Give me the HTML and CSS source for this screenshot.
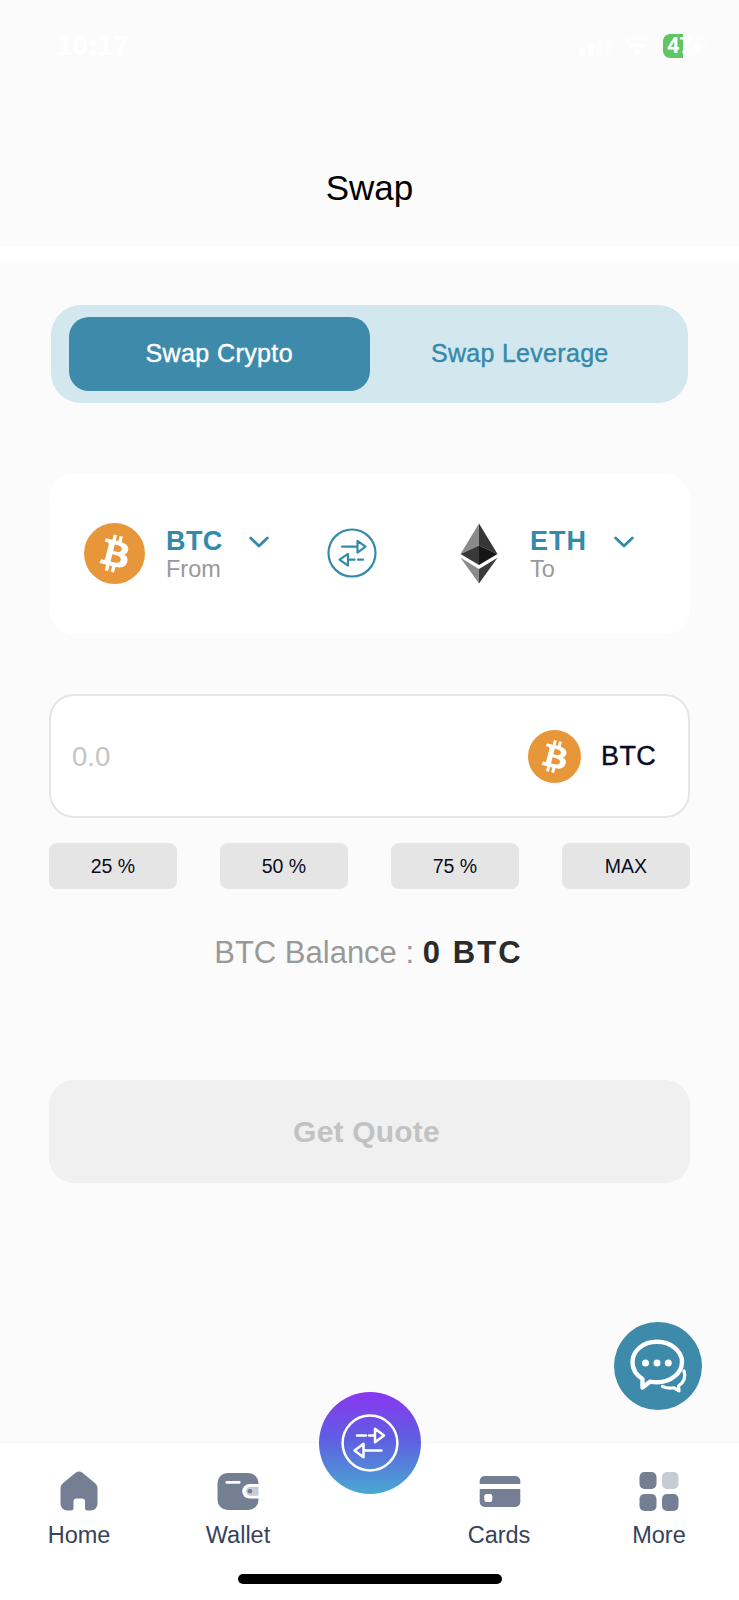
FILE: index.html
```
<!DOCTYPE html>
<html lang="en">
<head>
  <meta charset="UTF-8" />
  <meta name="viewport" content="width=device-width, initial-scale=1.0"/>
  <title>Swap</title>
  <link rel="stylesheet" href="styles.css">
</head>
<body>
  <!-- Shared icons -->
  <svg class="sprite" width="0" height="0">
    <symbol id="btc" viewBox="0 0 32 32">
      <circle cx="16" cy="16" r="16" fill="#e8963a"/>
      <path fill="#fff" d="M23.189 14.02c.314-2.096-1.283-3.223-3.465-3.975l.708-2.84-1.728-.43-.69 2.765c-.454-.114-.92-.22-1.385-.326l.695-2.783L15.596 6l-.708 2.839c-.376-.086-.746-.17-1.104-.26l.002-.009-2.384-.595-.46 1.846s1.283.294 1.256.312c.7.175.826.638.805 1.006l-.806 3.235c.048.012.11.03.18.057l-.183-.045-1.13 4.532c-.086.212-.303.531-.793.41.018.025-1.256-.313-1.256-.313l-.858 1.978 2.25.561c.418.105.828.215 1.231.318l-.715 2.872 1.727.43.708-2.84c.472.127.93.245 1.378.357l-.706 2.828 1.728.43.715-2.866c2.948.558 5.164.333 6.097-2.333.752-2.146-.037-3.385-1.588-4.192 1.13-.26 1.98-1.003 2.207-2.538zm-3.95 5.538c-.533 2.147-4.148.986-5.32.695l.95-3.805c1.172.293 4.929.872 4.37 3.11zm.535-5.569c-.487 1.953-3.495.96-4.47.717l.86-3.45c.975.243 4.118.696 3.61 2.733z"/>
    </symbol>
    <symbol id="chevron" viewBox="0 0 20 12">
      <path d="M1.700 2 10 10l8.300-8" fill="none" stroke="#338aab" stroke-width="2.800" stroke-linecap="round" stroke-linejoin="round"/>
    </symbol>
  </svg>

  <div class="statusbar">
    <span class="time">10:17</span>
    <div class="indicators">
      <svg width="36" height="20" viewBox="0 0 36 20" fill="#fff">
        <rect x="0" y="12" width="6" height="8" rx="2"/>
        <rect x="9" y="8" width="6" height="12" rx="2"/>
        <rect x="18" y="4" width="6" height="16" rx="2" opacity=".4"/>
        <rect x="27" y="0" width="6" height="20" rx="2" opacity=".4"/>
      </svg>
      <svg width="26" height="20" viewBox="0 0 26 20" fill="none" stroke="#fff" stroke-width="3.6">
        <path d="M2 6.500a16 16 0 0 1 22 0" opacity=".5"/>
        <path d="M5.500 11.500a11 11 0 0 1 15 0"/>
        <path d="M13 19l-4-4a6 6 0 0 1 8 0z" fill="#fff" stroke="none"/>
      </svg>
      <div class="battery">47<svg width="11" height="16" viewBox="0 0 11 16"><path d="M7 0 0 9h4L3 16l8-10H6z" fill="#fff"/></svg></div>
    </div>
  </div>

  <header>
    <h1>Swap</h1>
  </header>

  <main>
    <div class="tabs">
      <button class="tab active">Swap Crypto</button>
      <button class="tab">Swap Leverage</button>
    </div>

    <section class="pair">
      <div class="coin from">
        <svg class="coin-icon" width="61" height="61"><use href="#btc"/></svg>
        <div class="coin-text">
          <strong>BTC</strong>
          <span>From</span>
        </div>
        <svg class="chevron" width="20" height="12"><use href="#chevron"/></svg>
      </div>

      <svg class="switch" width="50" height="50" viewBox="0 0 50 50" fill="none" stroke="#338aab" stroke-width="2.200" stroke-linejoin="round" stroke-linecap="round">
        <circle cx="25" cy="25" r="23.500"/>
        <path d="M15 18.700h15M30.500 12.800v11.800l8-5.900z"/>
        <path d="M36 31.700h-5M27.500 31.700h-6M21 25.800v11.800l-8.500-5.900z"/>
      </svg>

      <div class="coin to">
        <svg class="coin-icon" width="38" height="61" viewBox="0 0 38 60">
          <path d="M19 0v22L.5 30.500z" fill="#8a8a8a"/>
          <path d="M19 0v22l18.500 8.500z" fill="#363636"/>
          <path d="M.5 30.500 19 22v19.500z" fill="#393939"/>
          <path d="M37.500 30.500 19 22v19.500z" fill="#161616"/>
          <path d="M.5 34.300 19 45.500V60z" fill="#8a8a8a"/>
          <path d="M37.500 34.300 19 45.500V60z" fill="#3b3b3b"/>
        </svg>
        <div class="coin-text">
          <strong>ETH</strong>
          <span>To</span>
        </div>
        <svg class="chevron" width="20" height="12"><use href="#chevron"/></svg>
      </div>
    </section>

    <div class="amount">
      <span class="placeholder">0.0</span>
      <svg width="53" height="53"><use href="#btc"/></svg>
      <span class="symbol">BTC</span>
    </div>

    <div class="percents">
      <button>25 %</button>
      <button>50 %</button>
      <button>75 %</button>
      <button>MAX</button>
    </div>

    <p class="balance">BTC Balance : <strong>0 BTC</strong></p>

    <button class="quote">Get Quote</button>
  </main>

  <!-- Support chat -->
  <div class="chat">
    <svg width="88" height="88" viewBox="0 0 88 88" fill="none" stroke="#fff" stroke-linejoin="round" stroke-linecap="round">
      <path d="M43 19.800c-13.800 0-24.500 8.700-24.500 20.200 0 7 3.700 13 10 17v8.500l7.500-5.800c2 .4 4.500.6 7 .6 13.500 0 25-9 25-20.300S56.500 19.800 43 19.800z" stroke-width="4.400"/>
      <path d="M70 49c2 6-.5 11.500-5.500 15l.5 5-5-3.200c-4 .8-8 .2-11.500-1.300" stroke-width="3.200"/>
      <g fill="#fff" stroke="none">
        <circle cx="31.500" cy="41" r="3.500"/>
        <circle cx="43" cy="41" r="3.500"/>
        <circle cx="54.300" cy="41" r="3.500"/>
      </g>
    </svg>
  </div>

  <nav>
    <a class="item">
      <svg width="42" height="42" viewBox="0 0 42 42">
        <path d="M17.600 2.800a5.500 5.500 0 0 1 6.800 0l12.800 10.400a6 6 0 0 1 2.300 4.600V34a6.500 6.500 0 0 1-6.500 6.500h-3.500A2.500 2.500 0 0 1 27 38v-6.500a3 3 0 0 0-3-3h-5.500a3 3 0 0 0-3 3V38a2.500 2.500 0 0 1-2.500 2.500H9A6.500 6.500 0 0 1 2.500 34V17.800a6 6 0 0 1 2.300-4.600z" fill="#747f94"/>
      </svg>
      <span>Home</span>
    </a>
    <a class="item">
      <svg width="42" height="42" viewBox="0 0 42 42">
        <rect x=".5" y="3" width="41" height="37" rx="10" fill="#747f94"/>
        <rect x="8.500" y="11" width="15" height="2.800" rx="1" fill="#fff"/>
        <path d="M42 14h-9.500a7.300 7.300 0 0 0 0 14.600H42z" fill="#fff"/>
        <path d="M41.500 16.800H33.600a4.500 4.500 0 0 0 0 9h7.900z" fill="#c7cbd4"/>
        <circle cx="33" cy="21.300" r="2.300" fill="#747f94"/>
      </svg>
      <span>Wallet</span>
    </a>
    <div class="center">
      <div class="fab">
        <svg width="58" height="58" viewBox="0 0 58 58" fill="none" stroke="#fff" stroke-width="2.500" stroke-linejoin="round" stroke-linecap="round">
          <circle cx="29" cy="29" r="27.400"/>
          <path d="M16 21.500h9M28 21.500h5M34 14.700v13.600l9-6.800z"/>
          <path d="M23.500 36.500h17M22.500 29.700v13.600l-9-6.800z"/>
        </svg>
      </div>
    </div>
    <a class="item cards">
      <svg width="42" height="42" viewBox="0 0 42 42" fill="#747f94">
        <path d="M.7 14v-3a5 5 0 0 1 5-5h30.600a5 5 0 0 1 5 5v3z"/>
        <path d="M.7 19h40.600v13a5 5 0 0 1-5 5H5.700a5 5 0 0 1-5-5z"/>
        <rect x="5.300" y="24" width="8" height="8" rx="2.200" fill="#fff"/>
      </svg>
      <span>Cards</span>
    </a>
    <a class="item">
      <svg width="42" height="42" viewBox="0 0 42 42" fill="#747f94">
        <rect x="1.500" y="2" width="17" height="17" rx="5"/>
        <rect x="24" y="2" width="16.500" height="17" rx="5" fill="#c7cbd4"/>
        <rect x="1.500" y="24" width="17" height="17" rx="5"/>
        <rect x="24" y="24" width="16.500" height="17" rx="5"/>
      </svg>
      <span>More</span>
    </a>
    <div class="home-bar"></div>
  </nav>
</body>
</html>
```

FILE: styles.css
```
* {
  box-sizing: border-box;
}

body {
  margin: 0;
  width: 739px;
  height: 1600px;
  position: relative;
  display: flex;
  flex-direction: column;
  overflow: hidden;
  font-family: "Liberation Sans", Arial, sans-serif;
  background-color: #fbfbfb;
}

svg {
  display: block;
  flex-shrink: 0;
}

button {
  border: none;
  padding: 0;
  font-family: inherit;
}

.sprite {
  position: absolute;
}

.statusbar {
  height: 91px;
  padding: 0 33px 0 57px;
  display: flex;
  align-items: center;
  justify-content: space-between;
  color: #fff;
}

.time {
  font-size: 28px;
  font-weight: bold;
}

.indicators {
  display: flex;
  align-items: center;
  gap: 9px;
}

.battery {
  width: 43px;
  height: 24px;
  margin-left: 4px;
  padding-left: 4px;
  border-radius: 7px;
  display: flex;
  align-items: center;
  font-family: Roboto, "Liberation Sans", sans-serif;
  font-size: 22px;
  font-weight: bold;
  background: linear-gradient(90deg, #62c563 20px, #fcfcfc 20px);
}

header {
  height: 172px;
  padding-top: 77px;
  border-bottom: 16px solid #fff;
  text-align: center;
}

header h1 {
  margin: 0;
  font-size: 35px;
  line-height: 40px;
  font-weight: normal;
  color: #000;
}

main {
  display: flex;
  flex-direction: column;
  padding: 42px 49px 0;
}

.tabs {
  display: flex;
  height: 98px;
  margin: 0 2px;
  padding: 12px 18px;
  border-radius: 30px;
  background-color: #d3e7ee;
}

.tab {
  flex: 1;
  padding-bottom: 2px;
  border-radius: 20px;
  font-size: 25px;
  letter-spacing: 0.3px;
  color: #338aab;
  background: none;
  -webkit-text-stroke: 0.4px;
}

.tab.active {
  letter-spacing: 0.4px;
  color: #fff;
  background-color: #3e8aaa;
}

.pair {
  display: flex;
  align-items: flex-start;
  height: 160px;
  margin-top: 71px;
  padding: 49px 54px 0 35px;
  border-radius: 25px;
  background-color: #fff;
}

.coin {
  display: flex;
}

.coin-text {
  display: flex;
  flex-direction: column;
  width: 83px;
  margin-left: 21px;
  padding-top: 3px;
}

.to .coin-text {
  width: 84px;
  margin-left: 32px;
}

.coin-text strong {
  font-size: 27px;
  line-height: 30px;
  letter-spacing: 0.4px;
  color: #338aab;
}

.to strong {
  letter-spacing: 1px;
}

.coin-text span {
  font-size: 23.5px;
  line-height: 26px;
  color: #999;
}

.chevron {
  margin-top: 13px;
}

.switch {
  margin: 5px 83px 0 58px;
}

.amount {
  display: flex;
  align-items: center;
  height: 124px;
  margin-top: 60px;
  padding: 0 32px 0 21px;
  border: 2px solid #e5e5e5;
  border-radius: 25px;
  background-color: #fff;
}

.placeholder {
  flex: 1;
  padding-top: 2px;
  font-size: 27.5px;
  color: #c4c4c4;
}

.symbol {
  margin-left: 20px;
  font-size: 27px;
  letter-spacing: 0.3px;
  color: #0b0b23;
  -webkit-text-stroke: 0.4px;
}

.percents {
  display: flex;
  justify-content: space-between;
  margin-top: 25px;
}

.percents button {
  width: 128px;
  height: 46px;
  border-radius: 8px;
  font-size: 19.5px;
  color: #0b0b23;
  background-color: #e5e5e5;
}

.balance {
  margin: 45px 0 0;
  padding-right: 2px;
  font-size: 31px;
  line-height: 38px;
  text-align: center;
  color: #999;
}

.balance strong {
  letter-spacing: 2.1px;
  color: #2b2b2b;
}

.quote {
  height: 103px;
  margin-top: 108px;
  padding-right: 6px;
  border-radius: 25px;
  font-size: 30px;
  font-weight: bold;
  letter-spacing: 0.2px;
  color: #c2c2c2;
  background-color: #f0f0f0;
}

/* floats above the page content */
.chat {
  position: absolute;
  right: 37px;
  bottom: 190px;
  width: 88px;
  height: 88px;
  border-radius: 50%;
  background-color: #3e8aaa;
}

nav {
  display: grid;
  grid-template-columns: 158px 160px 103px 158px 160px;
  height: 158px;
  margin-top: auto;
  padding-top: 27px;
  border-top: 1px solid #f6f6f6;
  background-color: #fff;
}

.item {
  display: flex;
  flex-direction: column;
  align-items: center;
  gap: 9px;
  font-size: 23.5px;
  line-height: 28px;
  color: #37435c;
}

.cards span {
  margin-right: 2px;
}

.center {
  display: flex;
  justify-content: center;
}

.fab {
  display: flex;
  align-items: center;
  justify-content: center;
  width: 102px;
  height: 102px;
  margin-top: -78px;
  border-radius: 50%;
  background: linear-gradient(#8b37f0, #5f5de2 45%, #49a9d0);
}

.home-bar {
  grid-column: 1 / -1;
  justify-self: center;
  align-self: end;
  width: 264px;
  height: 10px;
  margin-bottom: 16px;
  border-radius: 5px;
  background-color: #000;
}
```
